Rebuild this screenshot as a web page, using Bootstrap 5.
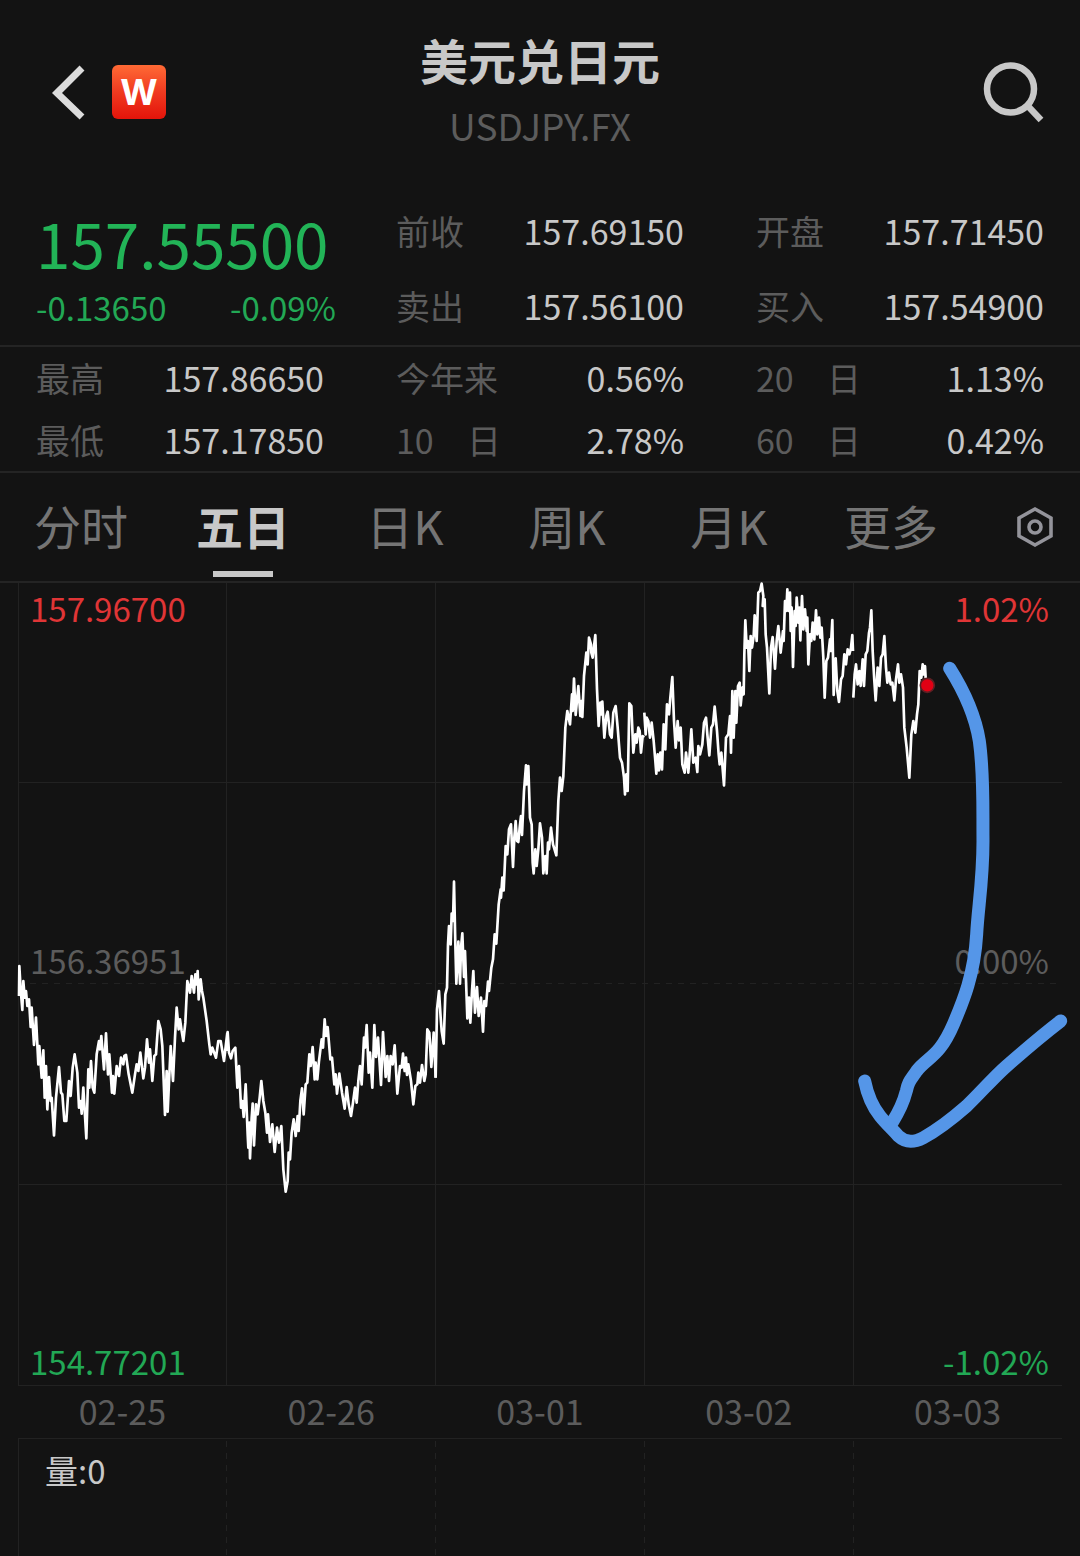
<!DOCTYPE html>
<html lang="zh-CN" data-bs-theme="dark">
<head>
<meta charset="utf-8">
<meta name="viewport" content="width=device-width, initial-scale=1">
<title>美元兑日元 USDJPY.FX</title>
<link rel="stylesheet" href="https://cdn.jsdelivr.net/npm/bootstrap@5.3.0/dist/css/bootstrap.min.css">
<style>
  body { background: #131313; color: #c8c8c8; font-family: "Noto Sans CJK SC", sans-serif; overflow-x: hidden; }
  button { color: inherit; }
  .rule-b { border-bottom: 2px solid #242424; }

  .topbar { padding: 33px 36px 43px; }
  .heading { padding-bottom: 6px; }
  .name { font-size: 48px; line-height: 52px; font-weight: 700; margin-bottom: 20px; color: #c8c8c8; }
  .code { font-size: 37px; line-height: 40px; color: #5c5c5c; font-weight: 400; }
  .back { margin-left: 14px; margin-right: 26px; }
  .logo { width: 54px; height: 54px; border-radius: 6px; background: linear-gradient(#ff6a35, #f03a20 50%, #e4140a);
          font: 700 36px/54px Inter, sans-serif; color: #fff; text-decoration: none; }

  .cell { padding: 0 36px; }
  .quote { padding-top: 12px; padding-bottom: 13px; }
  .quote .pair { line-height: 50px; }
  .quote .pair + .pair { margin-top: 25px; }
  .price-cell { padding: 0 24px 0 36px; }
  .price { font-size: 62px; line-height: 72px; margin-bottom: 4px; color: #22b457; }
  .change { font-size: 33px; line-height: 50px; color: #22a855; }
  .stats .pair { line-height: 62px; }
  .key { font-size: 34px; color: #5c5c5c; font-weight: 400; }
  .key-wide { width: 105px; }
  .val { font-size: 34px; color: #c8c8c8; }

  .tabs { height: 110px; }
  .tab { flex: 0 0 15%; font-size: 47px; line-height: 104px; padding-bottom: 4px; color: #757575; text-decoration: none; text-align: center; position: relative; }
  .tab.active { color: #c8c8c8; font-weight: 700; }
  .tab.active::after { content: ""; position: absolute; left: 50%; bottom: 4px; width: 60px; height: 6px; margin-left: -30px; background: #c8c8c8; }
  .gear { padding-left: 18px; }

  .chart { margin: 0 18px; }
  .plot > * { grid-area: 1 / 1; }
  .plot svg, .volume svg { width: 100%; overflow: visible; display: block; }
  .scale { display: grid; grid-template-rows: 1fr 1fr; padding: 2px 13px 2px 12px; font-size: 33px; line-height: 46px; color: #5c5c5c; }
  .scale-top { padding-bottom: 2px; }
  .up { color: #e03536; }
  .down { color: #22a855; }
  .ink { pointer-events: none; z-index: 1; }
  .dates { font-size: 34px; line-height: 49px; padding-bottom: 2px; color: #5c5c5c; }
  .volume { display: grid; }
  .volume > * { grid-area: 1 / 1; }
  .volume-label { font-size: 33px; line-height: 48px; padding: 9px 27px; }
</style>
</head>
<body>
<header class="topbar d-flex align-items-center">
  <div class="d-flex align-items-center flex-fill w-25">
    <button type="button" class="btn p-0 border-0 back" aria-label="返回">
      <svg class="d-block" width="36" height="56" viewBox="0 0 36 56" fill="none" stroke="#dcdcdc" stroke-width="7"><path d="M32 4 7 29l25 24"/></svg>
    </button>
    <a href="#" class="logo text-center">W</a>
  </div>
  <div class="heading text-center">
    <h1 class="name">美元兑日元</h1>
    <div class="code">USDJPY.FX</div>
  </div>
  <div class="d-flex justify-content-end flex-fill w-25">
    <button type="button" class="btn p-0 border-0" aria-label="搜索">
      <svg class="d-block" width="62" height="62" viewBox="0 0 62 62" fill="none" stroke="#c8c8c8" stroke-width="6.5"><circle cx="28.5" cy="28" r="23.5"/><path d="M44 43l15 16"/></svg>
    </button>
  </div>
</header>

<section class="quote rule-b row g-0">
  <div class="col-4 price-cell">
    <div class="price">157.55500</div>
    <div class="change d-flex justify-content-between"><span>-0.13650</span><span>-0.09%</span></div>
  </div>
  <dl class="col-4 cell mb-0">
    <div class="pair d-flex justify-content-between"><dt class="key">前收</dt><dd class="val mb-0">157.69150</dd></div>
    <div class="pair d-flex justify-content-between"><dt class="key">卖出</dt><dd class="val mb-0">157.56100</dd></div>
  </dl>
  <dl class="col-4 cell mb-0">
    <div class="pair d-flex justify-content-between"><dt class="key">开盘</dt><dd class="val mb-0">157.71450</dd></div>
    <div class="pair d-flex justify-content-between"><dt class="key">买入</dt><dd class="val mb-0">157.54900</dd></div>
  </dl>
</section>

<section class="stats rule-b row g-0">
  <dl class="col-4 cell mb-0">
    <div class="pair d-flex justify-content-between"><dt class="key">最高</dt><dd class="val mb-0">157.86650</dd></div>
    <div class="pair d-flex justify-content-between"><dt class="key">最低</dt><dd class="val mb-0">157.17850</dd></div>
  </dl>
  <dl class="col-4 cell mb-0">
    <div class="pair d-flex justify-content-between"><dt class="key">今年来</dt><dd class="val mb-0">0.56%</dd></div>
    <div class="pair d-flex justify-content-between"><dt class="key key-wide d-flex justify-content-between"><span>10</span><span>日</span></dt><dd class="val mb-0">2.78%</dd></div>
  </dl>
  <dl class="col-4 cell mb-0">
    <div class="pair d-flex justify-content-between"><dt class="key key-wide d-flex justify-content-between"><span>20</span><span>日</span></dt><dd class="val mb-0">1.13%</dd></div>
    <div class="pair d-flex justify-content-between"><dt class="key key-wide d-flex justify-content-between"><span>60</span><span>日</span></dt><dd class="val mb-0">0.42%</dd></div>
  </dl>
</section>

<nav class="tabs rule-b d-flex align-items-center">
  <a class="tab" href="#">分时</a>
  <a class="tab active" href="#" aria-current="page">五日</a>
  <a class="tab" href="#">日K</a>
  <a class="tab" href="#">周K</a>
  <a class="tab" href="#">月K</a>
  <a class="tab" href="#">更多</a>
  <button type="button" class="btn gear border-0 p-0 ps-3 flex-fill d-flex justify-content-center" aria-label="设置">
    <svg width="42" height="42" viewBox="-1 0 42 42" fill="none" stroke="#94949b" stroke-width="3.6"><path d="M21 3 37 12v18L21 39 5 30V12z"/><circle cx="21" cy="21" r="6"/></svg>
  </button>
</nav>

<main class="chart">
  <div class="plot d-grid">
    <svg viewBox="54 1746 3132 2409" aria-hidden="true">
      <g stroke="#222" stroke-width="3" fill="none">
        <path d="M55.5 1746V4153M679.500 1746V4153M1306.500 1746V4153M1933.500 1746V4153M2560.500 1746V4153"/>
        <path d="M54 2344.500H3186M54 3550.500H3186M54 4153.500H3186"/>
        <path d="M54 2947.500H3186" stroke-dasharray="18 18"/>
      </g>
      <g stroke="#fff" stroke-width="8" fill="none" stroke-linejoin="round">
        <polyline transform="translate(0 2820)" points="57,165 58,75 62,145 67,207 70,120 74,170 78,150 82,195 87,175 92,258 95,200 102,312 108,230 115,370 118,315 125,410 130,328 134,470 138,375 142,505 147,408 152,480 155,470 162,583 168,470 177,378 183,455 187,460 193,540 199,540 207,420 212,465 218,380 224,340 232,395 237,500 242,480 245,518 250,440 259,592 265,385 268,440 273,360 278,440 283,455 290,340 297,300 300,325 304,285 312,385 318,277 324,400 328,340 336,455 339,405 343,458 350,375 357,405 363,350 370,370 373,345 378,342 386,400 397,455 405,400 410,370 415,390 421,335 430,412 435,380 441,295 447,365 450,325 457,420 463,345 468,340 475,240 482,265 487,315 495,522 500,390 503,512 512,315 519,420 525,290 530,200 536,265 540,235 545,270 550,300 556,245 562,120 570,155 575,105 582,155 586,100 590,130 593,90 596,175 602,115 606,150 610,170 620,240 628,310 632,340 637,320 648,350 655,300 662,300 672,360 682,275"/>
        <polyline transform="translate(660 2850)" points="20,300 23,243 27,305 33,322 38,300 46,290 52,410 57,345 63,470 67,450 71,498 77,400 83,550 85,590 88,515 90,622 95,500 98,458 102,583 108,460 113,490 119,440 124,390 130,450 136,485 141,545 144,490 150,573 157,520 164,603 171,530 177,575 184,525 190,655 197,722 203,690 206,605 210,625 215,545 221,505 227,555 233,495 236,540 241,450 246,412 251,490 257,400 262,395 268,310 272,345 278,288 284,385 287,335 292,385 297,330 305,265 309,290 314,205 318,255 323,228 331,325 336,320 343,400 347,370 351,428 358,368 366,425 374,473 380,408 386,460 393,495 399,455 405,410 410,455 415,390 420,345 425,400 432,260 435,290 440,222 446,365 450,305 457,410 463,222 468,318 474,260 483,402 489,243 497,378 502,315 507,390 512,315 518,340 524,283 532,428 540,345 545,350 549,308 554,360 558,320 561,372 565,340 573,390 580,460 586,405 592,400 595,365 600,395 606,342 613,390 617,370 622,235 628,245 634,348 641,245 647,380"/>
        <polyline transform="translate(1260 1830)" points="47,1400 51,1195 57,1140 62,1220 65,1260 71,1298 76,1150 81,1130 84,1000 87,945 92,1000 95,908 99,930 102,812 106,1000 109,1118 115,992 120,1118 123,1010 127,967 132,1098 135,1020 142,1222 147,1160 151,1235 156,1140 160,1080 165,1205 171,1128 176,1215 183,1160 189,1262 193,1170 198,1185 204,1112 207,1140 214,1070 219,1045 224,970 229,998 236,880 242,835 243,860 247,800 251,838 257,705 262,730 267,655 273,640 279,768 283,680 287,630 291,690 295,693 299,650 303,615 306,672 312,540 318,463 320,520 325,465 330,620 335,640 338,755 341,787 346,715 350,765 355,715 360,637 366,680 370,787 376,735 380,787 384,695 387,715 393,650 399,700 409,733 415,570 420,500 425,540 430,495 436,350 442,300 450,340 456,250 458,300 462,203 467,312 475,225 481,315 484,270 487,318 492,195 499,125 503,160 507,80 513,100 514,125 518,140 526,72 531,235 536,345 541,275 545,310 547,272 553,380 559,315 563,302 570,370 575,380 580,305 587,285 593,350 600,440 606,455 612,500 615,550 619,490 623,540 628,277 634,285 640,425 646,370 650,395 655,350 659,360 663,425 668,375 672,380"/>
        <polyline transform="translate(1860 1710)" points="73,425 77,490 80,440 85,450 90,500 95,455 101,510 106,570 109,608 113,550 117,598 121,545 126,595 131,460 136,535 141,400 147,430 151,380 157,318 162,450 167,530 173,450 177,508 182,470 187,580 194,605 198,545 205,605 209,550 214,475 220,575 227,560 232,603 235,525 240,550 247,520 252,455 258,440 262,490 268,553 274,470 279,460 284,407 291,480 296,550 299,580 304,545 312,643 318,500 325,490 330,435 333,545 337,360 341,500 346,360 349,455 354,345 359,335 362,403 367,350 371,370 373,250 376,148 380,230 384,210 388,300 392,195 396,230 401,195 404,133 410,210 415,65 420,60 425,38 430,75 428,105 434,85 437,190 441,230 448,367 453,230 458,198 465,293 470,210 475,165 482,245 489,180 491,210 495,90 499,120 502,55 506,120 510,65 512,180 515,110 519,288 524,120 527,165 530,80 535,155 538,110 541,208 546,75 550,175 555,115 560,180 562,140 565,280 570,190 574,210 578,155 583,205 588,118 592,190 597,140 601,200 605,170 610,260 614,380 619,270 624,260 630,205 632,240 637,147 641,372 647,262 652,360 657,393 663,325 668,315 673,250 678,280 683,235 688,250 693,230 697,192 699,240"/>
        <polyline transform="translate(1860 1710)" points="700,380 704,310 708,280 713,340 718,300 722,345 728,265 732,345 737,250 742,240 747,185 750,170 754,118 758,240 763,330 767,388 773,290 778,345 783,260 788,250 793,195 798,290 802,335 807,305 812,340 817,335 823,388 828,325 834,280 838,335 843,310 849,350 853,470 860,530 868,620 874,490 880,450 886,485 891,430 895,400 899,300 904,320 908,280 911,310 915,285 918,340 922,343"/>
      </g>
      <circle cx="2782" cy="2053" r="21" fill="#e10014" stroke="#5d2024" stroke-width="5"/>
    </svg>
    <div class="scale">
      <div class="scale-top d-flex flex-column justify-content-between">
        <div class="d-flex justify-content-between up"><span>157.96700</span><span>1.02%</span></div>
        <div class="d-flex justify-content-between"><span>156.36951</span><span>0.00%</span></div>
      </div>
      <div class="d-flex justify-content-between align-items-end down"><span>154.77201</span><span>-1.02%</span></div>
    </div>
    <svg class="ink" viewBox="54 1746 3132 2409" aria-hidden="true">
      <g transform="translate(2520 1920)" fill="none" stroke="#5596e8" stroke-width="39" stroke-linecap="round" stroke-linejoin="round">
        <path d="M329 82C372 150 405 220 418 300C432 400 428 500 429 600C429 720 414 800 410 880C403 1000 370 1080 340 1150C297 1250 262 1248 230 1290C212 1317 205 1320 199 1350C190 1385 175 1415 158 1442"/>
        <path d="M74 1320C82 1360 100 1400 120 1425C140 1450 155 1462 175 1485C200 1508 225 1503 250 1490C300 1463 340 1430 380 1395C420 1357 460 1310 500 1275C560 1222 610 1180 662 1140"/>
      </g>
    </svg>
  </div>
  <div class="dates row g-0 text-center">
    <div class="col">02-25</div><div class="col">02-26</div><div class="col">03-01</div><div class="col">03-02</div><div class="col">03-03</div>
  </div>
  <div class="volume">
    <svg viewBox="54 4308 3132 360" aria-hidden="true" stroke="#222" stroke-width="3" fill="none">
      <path d="M54 4312.500H3186M55.500 4311V4668"/>
      <path d="M679.500 4320V4668M1306.500 4320V4668M1933.500 4320V4668M2560.500 4320V4668" stroke-dasharray="18 18"/>
    </svg>
    <div class="volume-label">量:0</div>
  </div>
</main>
<script src="https://cdn.jsdelivr.net/npm/bootstrap@5.3.0/dist/js/bootstrap.bundle.min.js"></script>
</body>
</html>
